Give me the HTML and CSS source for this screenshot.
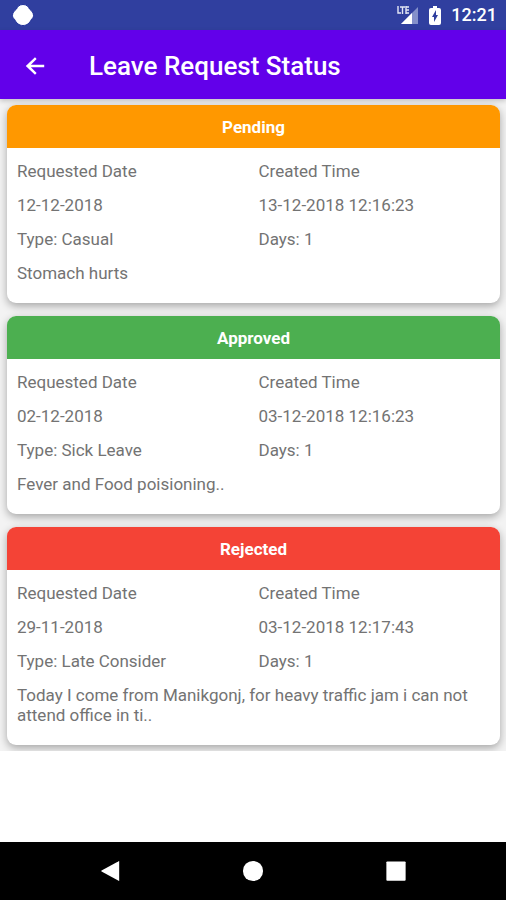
FILE: index.html
```
<!DOCTYPE html>
<html lang="en">
<head>
<meta charset="utf-8">
<meta name="viewport" content="width=device-width, initial-scale=1">
<title>Leave Request Status</title>
<link rel="stylesheet" href="styles.css">
</head>
<body>
<div class="status-bar">
  <svg class="notification" viewBox="0 0 24 24" aria-hidden="true"><path d="M12 1.500c3.500 0 5.500 2 6.500 4.500 2.500 2 4 4 4 6.500 0 2-1 3-2.200 4-1.600 3.600-4.300 6-8.300 6s-6.700-2.400-8.300-6c-1.200-1-2.200-2-2.200-4 0-2.500 1.500-4.500 4-6.500 1-2.500 3-4.500 6.500-4.500z" fill="#fff" stroke="#20319a"/></svg>
  <div class="indicators">
    <svg class="signal" viewBox="0 0 22 19" aria-hidden="true">
      <path d="M21 1v17H4z" fill="#8490ca"/><path d="M15 7v11H4z" fill="#fff"/>
      <path d="M1 1v6h3M4 1h4M6 1v7M9 1v6M9 1h3M9 4h3M9 7h3" fill="none" stroke="#303f9f" stroke-width="3"/>
      <path d="M1 0v7h3M3 1h5M5.500 1v7M9 0v8M9 1h3M9 4h3M9 7h3" fill="none" stroke="#e4e7f5" stroke-width="1.400"/>
    </svg>
    <svg class="battery" viewBox="0 0 12 19" aria-hidden="true"><path d="M4 0h4v2h2q2 0 2 2v13q0 2-2 2H2q-2 0-2-2V4q0-2 2-2h2z" fill="#fff"/><path d="M7 4l-4 7h2v5l4-7H7z" fill="#303f9f"/></svg>
    <time class="clock">12:21</time>
  </div>
</div>
<header class="app-bar">
  <button class="back" type="button" aria-label="Back"><svg viewBox="0 0 24 24" aria-hidden="true"><path d="M20.500 10.800H8.200l5.300-5.300L12 4l-8.500 8 8.500 8 1.500-1.500-5.300-5.300h12.300z" fill="#fff"/></svg></button>
  <h1 class="title">Leave Request Status</h1>
</header>
<main class="content">
  <div class="requests">
    <article class="card">
      <h2 class="card-status pending">Pending</h2>
      <div class="card-body">
        <span>Requested Date</span><span>Created Time</span>
        <span>12-12-2018</span><span>13-12-2018 12:16:23</span>
        <span>Type: Casual</span><span>Days: 1</span>
        <p class="reason">Stomach hurts</p>
      </div>
    </article>
    <article class="card">
      <h2 class="card-status approved">Approved</h2>
      <div class="card-body">
        <span>Requested Date</span><span>Created Time</span>
        <span>02-12-2018</span><span>03-12-2018 12:16:23</span>
        <span>Type: Sick Leave</span><span>Days: 1</span>
        <p class="reason">Fever and Food poisioning..</p>
      </div>
    </article>
    <article class="card">
      <h2 class="card-status rejected">Rejected</h2>
      <div class="card-body">
        <span>Requested Date</span><span>Created Time</span>
        <span>29-11-2018</span><span>03-12-2018 12:17:43</span>
        <span>Type: Late Consider</span><span>Days: 1</span>
        <p class="reason">Today I come from Manikgonj, for heavy traffic jam i can not attend office in ti..</p>
      </div>
    </article>
  </div>
</main>
<nav class="nav-bar" aria-label="System">
  <button type="button" aria-label="Back"><svg viewBox="0 0 24 24" aria-hidden="true"><path d="M22 1.500v21q0 .5-.6.2L2.800 12.600q-.8-.6 0-1.200L21.400 1.300q.6-.3.6.2z"/></svg></button>
  <button type="button" aria-label="Home"><svg viewBox="0 0 24 24" aria-hidden="true"><circle cx="12" cy="12" r="11"/></svg></button>
  <button type="button" aria-label="Overview"><svg viewBox="0 0 24 24" aria-hidden="true"><rect x="1.500" y="1.500" width="21" height="21" rx="1"/></svg></button>
</nav>
</body>
</html>
```
FILE: styles.css
```
* { box-sizing: border-box; }

body {
  margin: 0;
  min-height: 100vh;
  display: flex;
  flex-direction: column;
  background: #fff;
  color: #737373;
  font: 17px/20px Roboto, sans-serif;
}

button {
  padding: 0;
  border: 0;
  background: none;
  display: flex;
  cursor: pointer;
}

h1, h2, p { margin: 0; }

.status-bar {
  height: 30px;
  padding: 0 9px 0 11px;
  display: flex;
  align-items: center;
  justify-content: space-between;
  background: #303f9f;
  color: #fff;
}

.notification { width: 24px; height: 24px; }

.indicators { display: flex; align-items: center; gap: 10px; }

.signal { width: 22px; height: 19px; }

.battery { width: 12px; height: 19px; }

.clock { font-size: 18px; font-weight: 500; }

.app-bar {
  position: relative;
  z-index: 1;
  height: 69px;
  padding: 2px 22px 0;
  display: flex;
  align-items: center;
  gap: 41px;
  background: #6200ea;
  box-shadow: 0 2px 5px rgba(0, 0, 0, 0.2);
}

.back svg { width: 26px; height: 26px; }

.title {
  color: #fff;
  font-size: 26px;
  line-height: 30px;
  font-weight: 500;
}

.content { flex: 1; }

.requests {
  padding: 6px 6px 6px 7px;
  display: grid;
  gap: 13px;
  overflow: hidden;
  background: #f3f3f3;
}

.card {
  overflow: hidden;
  border-radius: 9px;
  background: #fff;
  box-shadow: 0 3px 8px rgba(0, 0, 0, 0.32);
}

.card-status {
  padding: 12px 0 11px;
  color: #fff;
  font-size: 17px;
  line-height: 20px;
  font-weight: 700;
  text-align: center;
}

.pending { background: #ff9800; }
.approved { background: #4caf50; }
.rejected { background: #f44336; }

.card-body {
  padding: 13px 0 20px 10px;
  display: grid;
  grid-template-columns: 1fr 1fr;
  row-gap: 14px;
}

.reason { grid-column: 1 / -1; padding-right: 10px; }

.nav-bar {
  height: 58px;
  padding: 0 39px;
  display: grid;
  grid-template-columns: repeat(3, 1fr);
  place-items: center;
  background: #000;
}

.nav-bar svg { width: 22px; height: 22px; fill: #fff; }
```
